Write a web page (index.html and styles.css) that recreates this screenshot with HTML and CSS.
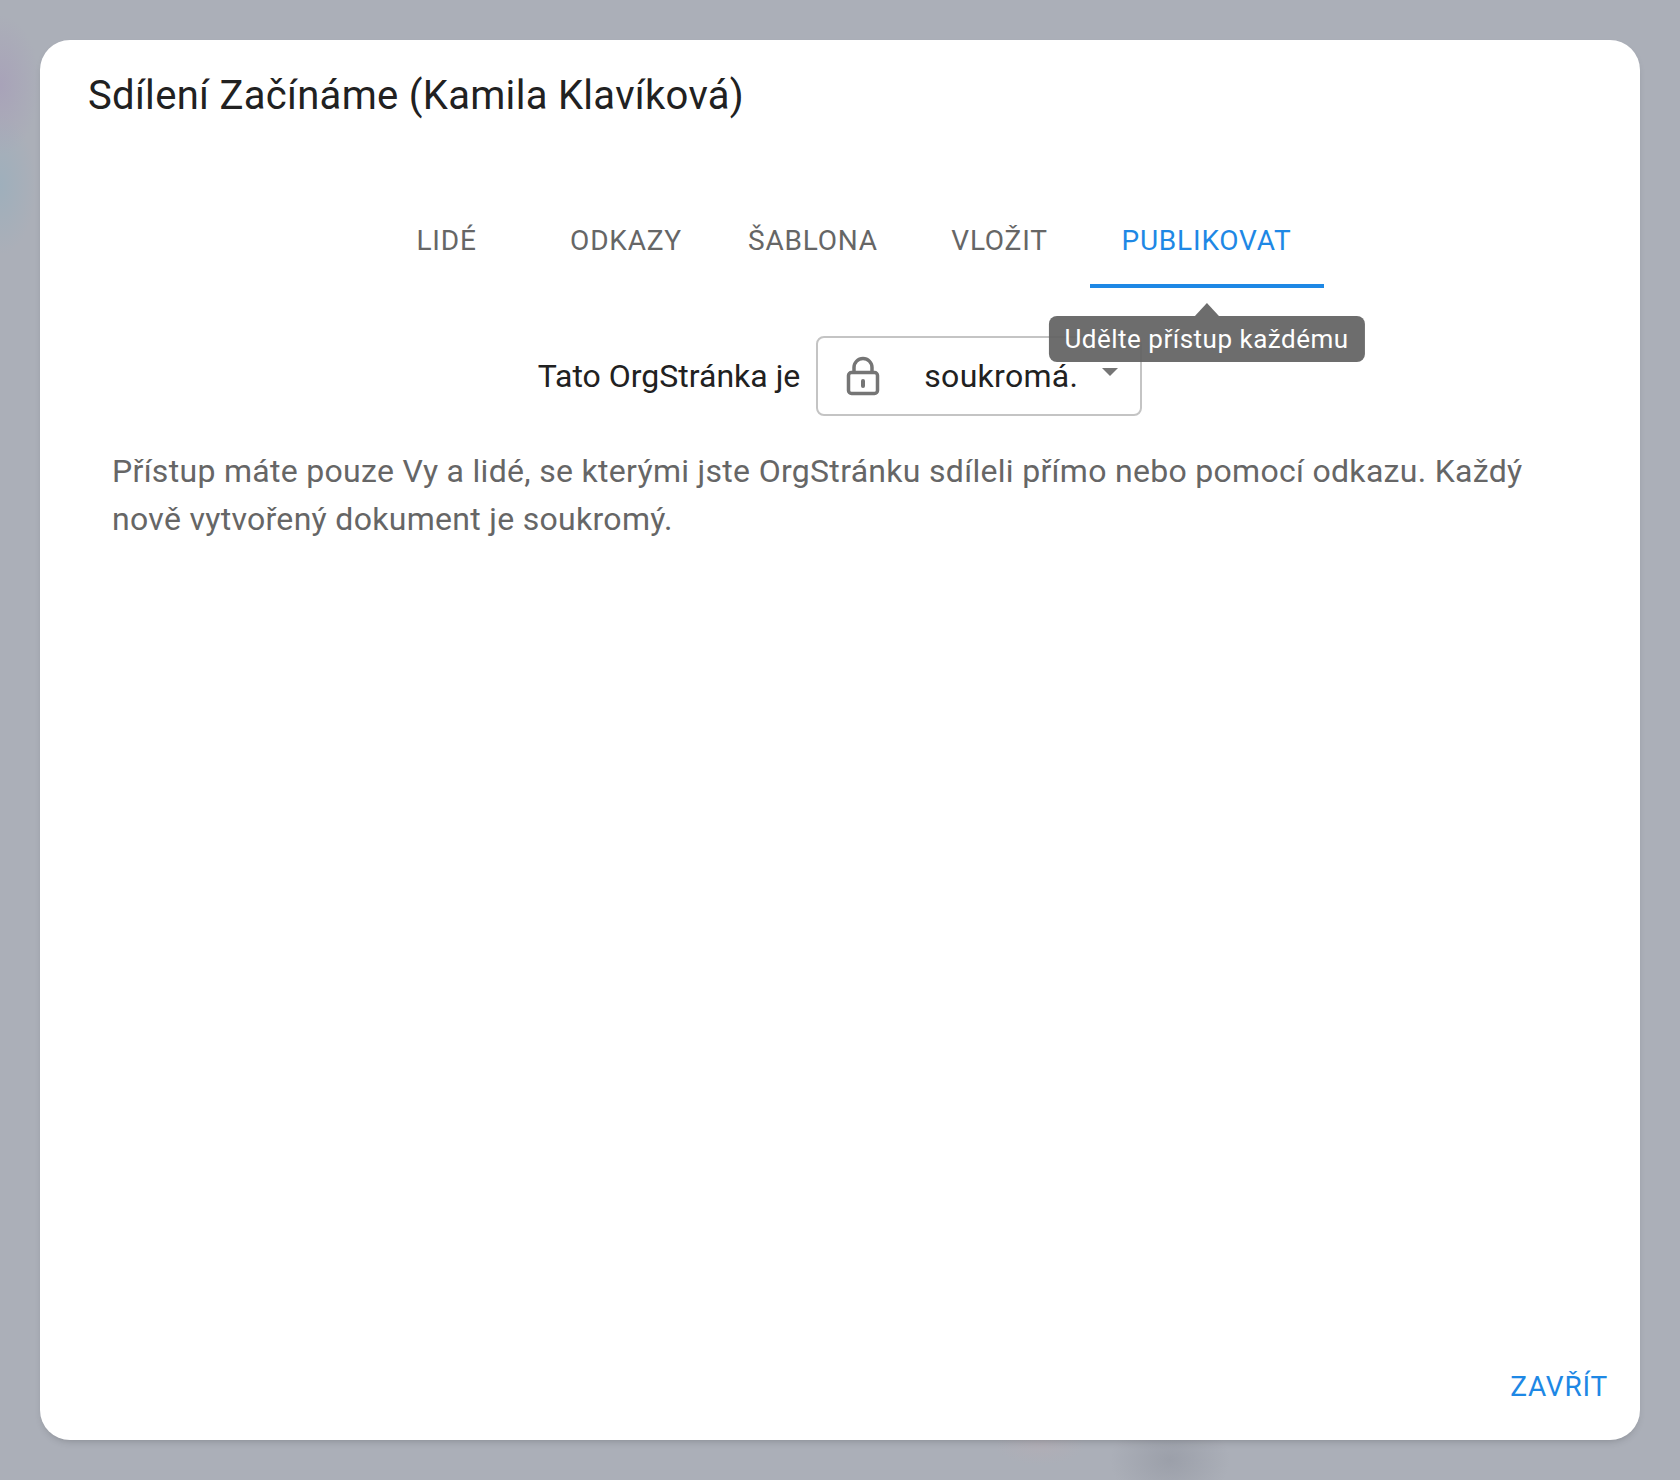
FILE: index.html
```html
<!DOCTYPE html>
<html lang="cs">
<head>
    <meta charset="UTF-8">
    <meta name="viewport" content="width=device-width, initial-scale=1.0">
    <title>Sdílení Začínáme</title>
    <link rel="stylesheet" href="styles.css">
</head>
<body>
    <div class="dialog">
        <h1 class="dialog-title">Sdílení Začínáme (Kamila Klavíková)</h1>

        <div class="tabs">
            <div class="tab">LIDÉ</div>
            <div class="tab">ODKAZY</div>
            <div class="tab">ŠABLONA</div>
            <div class="tab">VLOŽIT</div>
            <div class="tab tab-active">
                PUBLIKOVAT
                <div class="tooltip">Udělte přístup každému</div>
            </div>
        </div>

        <div class="dialog-content">
            <div class="visibility-row">
                <span class="visibility-label">Tato OrgStránka je</span>
                <div class="select">
                    <svg class="lock-icon" width="34" height="40" viewBox="0 0 34 40">
                        <rect class="lock-line" x="2.5" y="16.5" width="29" height="21" rx="3"/>
                        <path class="lock-line" d="M8 16v-4.5a9 9 0 0 1 18 0V16"/>
                        <rect class="lock-hole" x="15" y="23" width="4" height="9" rx="2"/>
                    </svg>
                    <span class="select-value">soukromá.</span>
                    <span class="select-arrow"></span>
                </div>
            </div>
            <p class="description">Přístup máte pouze Vy a lidé, se kterými jste OrgStránku sdíleli přímo nebo pomocí odkazu. Každý nově vytvořený dokument je soukromý.</p>
        </div>

        <div class="dialog-actions">
            <span class="close-button">ZAVŘÍT</span>
        </div>
    </div>
</body>
</html>
```

FILE: styles.css
```css
html, body {
    height: 100%;
}

body {
    margin: 0;
    padding: 40px;
    box-sizing: border-box;
    font-family: Roboto, "Liberation Sans", sans-serif;
    background-color: #abafb8;
    background-image:
        radial-gradient(ellipse 40px 70px at 0 85px, rgba(165, 150, 185, 0.5), transparent),
        radial-gradient(ellipse 36px 70px at 0 185px, rgba(150, 175, 190, 0.6), transparent),
        radial-gradient(ellipse 60px 45px at 1170px 1460px, rgba(140, 144, 155, 0.5), transparent),
        radial-gradient(ellipse 45px 20px at 1040px 1445px, rgba(185, 172, 178, 0.4), transparent);
}

.dialog {
    display: flex;
    flex-direction: column;
    height: 1400px;
    background: white;
    border-radius: 30px;
    box-shadow: 0 4px 8px -4px rgba(0, 0, 0, 0.25);
}

.dialog-title {
    margin: 0;
    padding: 31px 48px 0;
    font-size: 40px;
    line-height: 50px;
    font-weight: 400;
    letter-spacing: 0.3px;
    color: #212121;
}

/* tab widths measured from the reference */
.tabs {
    display: grid;
    grid-template-columns: 178px 181px 193px 180px 234px;
    justify-content: center;
    margin: 75px 0 0 1px;
    height: 92px;
}

.tab {
    position: relative;
    display: flex;
    align-items: center;
    justify-content: center;
    height: 88px;
    font-size: 28px;
    letter-spacing: 0.8px;
    color: #666;
}

.tab-active {
    color: #1e88e5;
    border-bottom: 4px solid #1e88e5;
}

.tooltip {
    position: absolute;
    top: 120px;
    left: 50%;
    transform: translateX(-50%);
    padding: 0 16px;
    height: 46px;
    line-height: 46px;
    border-radius: 8px;
    background: rgba(97, 97, 97, 0.92);
    color: white;
    font-size: 26px;
    letter-spacing: 0.5px;
    white-space: nowrap;
    z-index: 10;
}

.tooltip::before {
    content: '';
    position: absolute;
    left: 50%;
    top: -13px;
    margin-left: -12px;
    border-left: 12px solid transparent;
    border-right: 12px solid transparent;
    border-bottom: 13px solid rgba(97, 97, 97, 0.92);
}

.dialog-content {
    flex: 1;
    padding: 0 72px;
}

.visibility-row {
    display: flex;
    align-items: center;
    justify-content: center;
    margin-top: 48px;
}

.visibility-label {
    margin-right: 16px;
    font-size: 32px;
    color: #212121;
}

.select {
    display: flex;
    align-items: center;
    box-sizing: border-box;
    width: 326px;
    height: 80px;
    padding-left: 28px;
    border: 2px solid #c4c4c4;
    border-radius: 8px;
}

.lock-icon {
    flex-shrink: 0;
}

.lock-line {
    fill: none;
    stroke: #757575;
    stroke-width: 3.5;
}

.lock-hole {
    fill: #757575;
}

.select-value {
    margin-left: 44px;
    font-size: 32px;
    letter-spacing: 0.3px;
    color: #212121;
}

.select-arrow {
    margin: -8px 0 0 24px;
    border-left: 8px solid transparent;
    border-right: 8px solid transparent;
    border-top: 8px solid #757575;
}

.description {
    margin: 31px 0 0;
    font-size: 32px;
    line-height: 48px;
    letter-spacing: 0.3px;
    color: #666;
}

.dialog-actions {
    display: flex;
    justify-content: flex-end;
    padding: 0 32px 33px;
}

.close-button {
    font-size: 28px;
    line-height: 40px;
    letter-spacing: 0.8px;
    color: #1e88e5;
}
```
